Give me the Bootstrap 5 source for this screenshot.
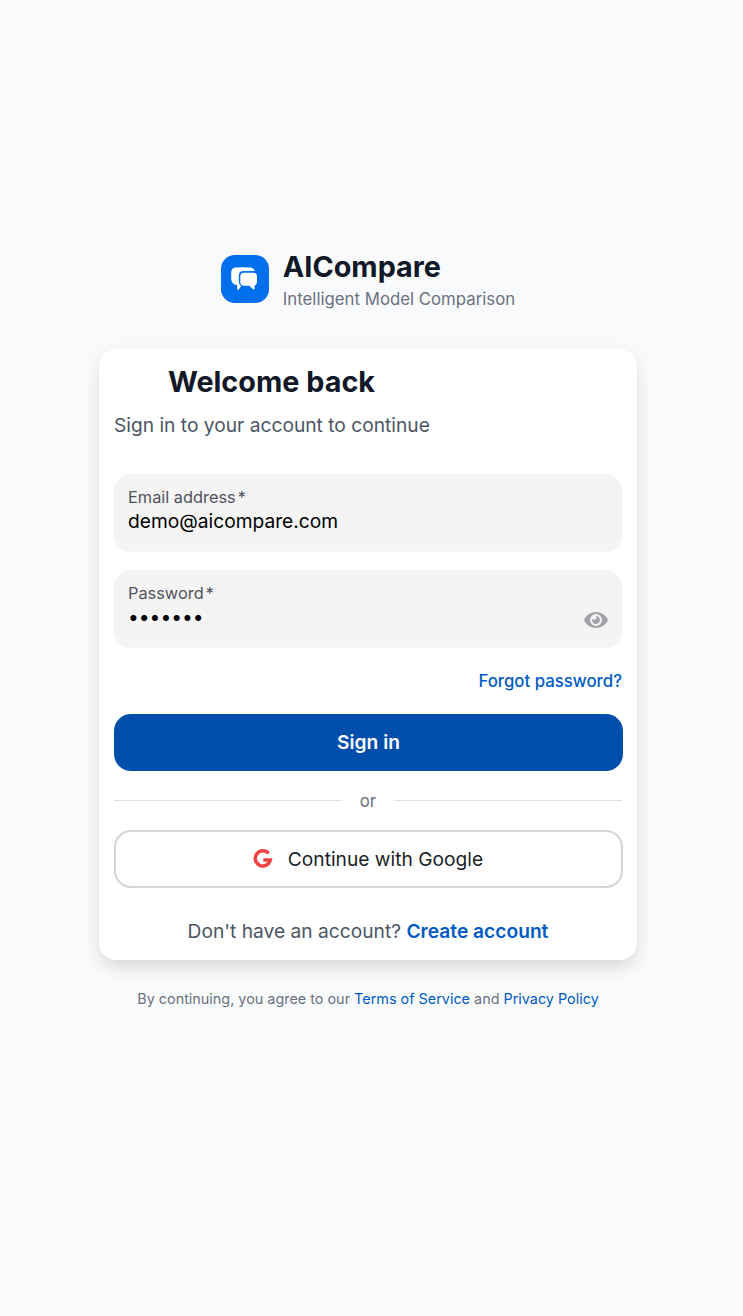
<!DOCTYPE html>
<html lang="en">
<head>
<meta charset="utf-8">
<meta name="viewport" content="width=device-width, initial-scale=1">
<title>AICompare – Sign in</title>
<link href="https://cdn.jsdelivr.net/npm/bootstrap@5.3.0/dist/css/bootstrap.min.css" rel="stylesheet">
<style>
body{font-family:Inter,sans-serif;background:#f9fafc;color:#4b5563;font-size:19.2px;line-height:28px}
.auth{width:538px;margin-left:99px;padding-top:249px}
.brand-mark{width:48px;height:48px;margin-top:6px;border-radius:14px;background:#006fee}
.brand-mark svg{margin-right:2px}
.brand-text{margin-left:14px}
.brand-name,.welcome{font-size:28.8px;line-height:36px;font-weight:700;color:#111827}
.brand-tag{font-size:16.8px;line-height:24px;color:#6b7280;margin-top:2px}
.panel{height:611px;margin-top:38px;padding:15px 15px 0;border-radius:17px;box-shadow:0 10px 18px -3px rgba(0,0,0,.1),0 4px 22px -1px rgba(0,0,0,.06)}
.intro{width:315px}
.welcome{margin-bottom:11px}
.field{height:77px;border-radius:17px;background:#f4f4f4;padding:11px 14px;box-shadow:0 1px 2px rgba(0,0,0,.05)}
.field-first{margin-top:35px}
.field-next{margin-top:19px}
.field label{display:block;font-size:16.35px;line-height:24px;color:#52525b}
.req{margin-left:2px}
.field input{font-size:19.2px;line-height:24px;height:24px;color:#000}
.eye{margin-bottom:4px}
a{color:#005bc4;text-decoration:none}
.forgot{font-size:16.8px;line-height:24px;font-weight:500;margin-top:22px}
.btn-auth{height:57px;border-radius:17px;font-size:19.2px;width:509px}
.btn-signin,.btn-signin:hover{background:#004eab;color:#fff;font-weight:600;margin-top:21px}
.btn-google{height:58px;border:2px solid #d1d5db;color:#1b1f27;margin-top:17px;padding-right:13px}
.btn-google svg{margin-right:15px}
.divider{margin-top:18px}
.rule{height:1px;background:#dedee0;margin-bottom:1px}
.or-text{font-size:16.8px;line-height:24px;color:#6b7280;margin:0 19px}
.signup{margin-top:29px}
.legal{font-size:14.4px;line-height:20px;color:#6b7280;margin-top:29px}
</style>
</head>
<body>
<main class="auth">
  <header class="d-flex justify-content-center align-items-start">
    <div class="brand-mark d-flex align-items-center justify-content-center">
      <svg width="28" height="26" viewBox="0 0 28 26" fill="#fff"><path d="M7.200 18.900Q1.200 18.500 1.200 12.700V6.500Q1.200 2.200 5.500 1.600Q13 .7 20.500 1.600Q24 2.200 24.800 5H13.500Q8.800 5.200 8.800 9.800V15.700Q8.800 18.500 11 20.300L8.800 23.600Q7.600 24.600 7.200 23Z"/><path d="M14 6.800H23Q27 6.800 27 10.500V15.500Q27 18.800 24.600 19.400V22.800Q24.300 24.200 23 23.200L19.400 19.700H14Q10.300 19.700 10.300 15.900V10.500Q10.300 6.800 14 6.800Z"/></svg>
    </div>
    <div class="brand-text">
      <div class="brand-name">AICompare</div>
      <div class="brand-tag">Intelligent Model Comparison</div>
    </div>
  </header>
  <section class="panel bg-white">
    <div class="intro text-center text-nowrap">
      <h1 class="welcome">Welcome back</h1>
      <p class="mb-0">Sign in to your account to continue</p>
    </div>
    <form>
      <div class="field field-first">
        <label for="email">Email address<span class="req">*</span></label>
        <input id="email" class="d-block w-100 border-0 bg-transparent p-0" type="text" value="demo@aicompare.com">
      </div>
      <div class="field field-next d-flex">
        <div class="flex-grow-1">
          <label for="pw">Password<span class="req">*</span></label>
          <input id="pw" class="d-block w-100 border-0 bg-transparent p-0" type="password" value="compare">
        </div>
        <svg class="eye align-self-end" width="24" height="24" viewBox="0 0 24 24" fill="#a1a1aa"><path fill-rule="evenodd" d="M0 12C2 7.500 6.500 4 12 4S22 7.500 24 12C22 16.500 17.500 20 12 20S2 16.500 0 12ZM18 12A6 6 0 1 0 6 12A6 6 0 1 0 18 12Z"/><path d="M12 8A4 4 0 1 1 8.200 10.700A2.200 2.200 0 0 0 12 8Z"/></svg>
      </div>
      <div class="forgot text-end"><a href="#">Forgot password?</a></div>
      <button type="button" class="btn btn-auth btn-signin border-0">Sign in</button>
      <div class="divider d-flex align-items-center">
        <div class="rule flex-fill"></div><span class="or-text">or</span><div class="rule flex-fill"></div>
      </div>
      <button type="button" class="btn btn-auth btn-google d-flex align-items-center justify-content-center">
        <svg width="20" height="20" viewBox="0 0 20 20" fill="none" stroke="#ef4444" stroke-width="3.500"><path d="M15.600 4.400A7.600 7.600 0 1 0 17.300 11H10.300"/></svg>
        <span>Continue with Google</span>
      </button>
    </form>
    <p class="signup text-center mb-0">Don't have an account? <a class="fw-semibold" href="#">Create account</a></p>
  </section>
  <p class="legal text-center mb-0">By continuing, you agree to our <a href="#">Terms of Service</a> and <a href="#">Privacy Policy</a></p>
</main>
<script src="https://cdn.jsdelivr.net/npm/bootstrap@5.3.0/dist/js/bootstrap.bundle.min.js"></script>
</body>
</html>
